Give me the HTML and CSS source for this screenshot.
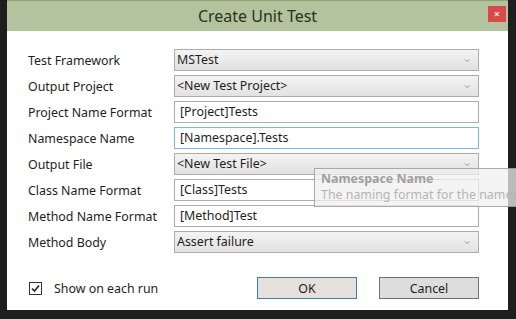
FILE: index.html
```html
<!DOCTYPE html>
<html lang="en">
<head>
    <meta charset="UTF-8">
    <title>Create Unit Test</title>
    <link rel="stylesheet" href="styles.css">
</head>
<body>
    <div class="dialog">
        <div class="title-bar">
            <span class="title">Create Unit Test</span>
            <span class="close-button">&#215;</span>
        </div>

        <div class="form">
            <div class="row">
                <label>Test Framework</label>
                <div class="combo">MSTest<svg viewBox="0 0 7 4" class="chevron"><path d="M0.5 0.5 L3.5 3.5 L6.5 0.5" /></svg></div>
            </div>
            <div class="row">
                <label>Output Project</label>
                <div class="combo">&lt;New Test Project&gt;<svg viewBox="0 0 7 4" class="chevron"><path d="M0.5 0.5 L3.5 3.5 L6.5 0.5" /></svg></div>
            </div>
            <div class="row">
                <label>Project Name Format</label>
                <div class="textbox">[Project]Tests</div>
            </div>
            <div class="row">
                <label>Namespace Name</label>
                <div class="textbox focused">[Namespace].Tests</div>
            </div>
            <div class="row">
                <label>Output File</label>
                <div class="combo">&lt;New Test File&gt;<svg viewBox="0 0 7 4" class="chevron"><path d="M0.5 0.5 L3.5 3.5 L6.5 0.5" /></svg></div>
            </div>
            <div class="row">
                <label>Class Name Format</label>
                <div class="textbox">[Class]Tests</div>
            </div>
            <div class="row">
                <label>Method Name Format</label>
                <div class="textbox">[Method]Test</div>
            </div>
            <div class="row">
                <label>Method Body</label>
                <div class="combo">Assert failure<svg viewBox="0 0 7 4" class="chevron"><path d="M0.5 0.5 L3.5 3.5 L6.5 0.5" /></svg></div>
            </div>
        </div>

        <div class="footer">
            <div class="show-each-run">
                <span class="checkbox">
                    <svg viewBox="0 0 11 11"><path d="M2 5.5 L4.5 8 L9 2.5" /></svg>
                </span>
                Show on each run
            </div>
            <div class="buttons">
                <button class="default">OK</button>
                <button>Cancel</button>
            </div>
        </div>
    </div>

    <div class="tooltip">
        <div class="tooltip-title">Namespace Name</div>
        <div class="tooltip-text">The naming format for the namespace</div>
    </div>
</body>
</html>
```

FILE: styles.css
```css
body {
    margin: 0;
    padding: 0;
    background-color: #1e1e1e;
    font-family: "Noto Sans", "Open Sans", sans-serif;
    font-size: 12.4px;
    color: #1e1e1e;
    width: 516px;
    height: 319px;
    overflow: hidden;
    position: relative;
}
.dialog {
    margin-left: 7px;
    width: 501px;
    height: 310px;
    background: #ffffff;
    display: flex;
    flex-direction: column;
}
.title-bar {
    height: 31px;
    background-color: #b3c39d;
    border-top: 1px solid #8fa07a;
    box-sizing: border-box;
    display: flex;
    align-items: center;
    justify-content: center;
    position: relative;
}
.title {
    font-size: 16px;
    color: #2b3222;
}
.close-button {
    position: absolute;
    right: 2px;
    top: 5px;
    width: 18px;
    height: 16px;
    background-color: #d9484b;
    color: #f4dede;
    font-size: 11px;
    font-weight: bold;
    line-height: 16px;
    text-align: center;
}
.form {
    display: flex;
    flex-direction: column;
    gap: 4px;
    padding: 18px 29px 0 21px;
}
.row {
    display: flex;
    align-items: center;
    height: 22px;
}
.row label {
    width: 146px;
}
.combo,
.textbox {
    width: 305px;
    height: 22px;
    box-sizing: border-box;
    display: flex;
    align-items: center;
    line-height: 1;
}
.combo {
    border: 1px solid #acacac;
    background: linear-gradient(#f3f3f3, #e2e2e2);
    padding-left: 2px;
    position: relative;
}
.textbox {
    border: 1px solid #abadb3;
    padding-left: 5px;
}
.textbox.focused {
    border-color: #7eb4ea;
}
.chevron {
    position: absolute;
    right: 8px;
    top: 9px;
    width: 6px;
    height: 3px;
    fill: none;
    stroke: #8a8a8a;
    stroke-width: 1.2;
}
.footer {
    display: flex;
    align-items: center;
    justify-content: space-between;
    margin-top: 24px;
    padding: 0 29px 0 22px;
    height: 22px;
}
.show-each-run {
    display: flex;
    align-items: center;
    gap: 12px;
}
.checkbox {
    width: 13px;
    height: 13px;
    box-sizing: border-box;
    border: 1px solid #333333;
    display: flex;
}
.checkbox svg {
    width: 11px;
    height: 11px;
    fill: none;
    stroke: #222222;
    stroke-width: 1.6;
}
.buttons {
    display: flex;
    gap: 22px;
}
button {
    width: 100px;
    height: 22px;
    border: 1px solid #707070;
    background-color: #dddddd;
    font-family: "Noto Sans", "Open Sans", sans-serif;
    font-size: 12.4px;
    color: #1e1e1e;
    padding: 0;
}
button.default {
    border-color: #3c7fb1;
    background-color: #e6e0dc;
}
.tooltip {
    position: absolute;
    left: 314px;
    top: 168px;
    width: 220px;
    height: 39px;
    box-sizing: border-box;
    padding: 2px 6px;
    background-color: rgba(240, 240, 240, 0.75);
    border: 1px solid rgba(140, 140, 140, 0.7);
    white-space: nowrap;
    line-height: 16px;
}
.tooltip-title {
    font-weight: bold;
    color: #a0a0a0;
}
.tooltip-text {
    color: #b4b4b4;
}
```
